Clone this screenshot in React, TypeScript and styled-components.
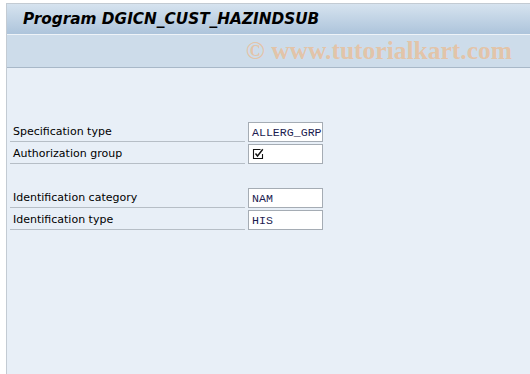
import React from "react";
import styled, { createGlobalStyle } from "styled-components";

const GlobalStyle = createGlobalStyle`
  html, body {
    margin: 0;
    padding: 0;
    background: #ffffff;
  }
`;

const Page = styled.div`
  height: 374px;
  padding: 3px 0 0 6px;
  box-sizing: border-box;
  display: flex;
  flex-direction: column;
  overflow: hidden;
`;

const Frame = styled.div`
  flex: 1;
  display: flex;
  flex-direction: column;
  border-left: 1px solid #c3cbd3;
  border-top: 1px solid #c3cbd3;
  box-shadow: inset 1px 0 0 #f4f7fa;
`;

const TitleBar = styled.div`
  height: 30px;
  display: flex;
  align-items: center;
  padding-left: 16px;
  background: linear-gradient(#d6e3ef, #adc4db);
  border-bottom: 1px solid #eef3f8;
  font-family: "DejaVu Sans", sans-serif;
  font-weight: bold;
  font-style: italic;
  font-size: 15.3px;
  color: #000000;
`;

const Watermark = styled.div`
  height: 32px;
  display: flex;
  align-items: center;
  justify-content: flex-end;
  padding-right: 18px;
  background: #cddcea;
  border-bottom: 1px solid #a8b8c8;
  font-family: "Liberation Serif", serif;
  font-weight: bold;
  font-size: 25.5px;
  color: rgba(242, 180, 125, 0.62);
`;

const Content = styled.div`
  flex: 1;
  background: #e8eff7;
  padding: 52px 0 0 3px;
  display: flex;
  flex-direction: column;
`;

const Group = styled.div<{ gap?: boolean }>`
  display: flex;
  flex-direction: column;
  margin-top: ${(p) => (p.gap ? "22px" : "0")};
`;

const Row = styled.div`
  display: flex;
  align-items: flex-end;
  height: 22px;
`;

const Label = styled.div`
  width: 235px;
  box-sizing: border-box;
  padding: 0 0 2px 3px;
  border-bottom: 1px solid #b6bec6;
  font-family: "DejaVu Sans", sans-serif;
  font-size: 11px;
  color: #000000;
  line-height: 15px;
`;

const Field = styled.div`
  margin-left: 3px;
  width: 75px;
  height: 20px;
  box-sizing: border-box;
  border: 1px solid #a5acb4;
  background: #ffffff;
  display: flex;
  align-items: center;
  padding-left: 3px;
  font-family: "Liberation Mono", monospace;
  font-size: 11.6px;
  color: #1c1c50;
  white-space: nowrap;
  overflow: hidden;
`;

const Check = styled.svg`
  width: 12px;
  height: 12px;
`;

function CheckIcon() {
  return (
    <Check viewBox="0 0 12 12">
      <path d="M8.5 1.5H1.5V10.5H10.5V6" fill="none" stroke="#111" strokeWidth="1.1" />
      <path d="M3.5 5.5L5.5 8L10.8 1.2" fill="none" stroke="#111" strokeWidth="1.4" />
    </Check>
  );
}

export default function App() {
  return (
    <>
      <GlobalStyle />
      <Page>
        <Frame>
          <TitleBar>Program DGICN_CUST_HAZINDSUB</TitleBar>
          <Watermark>© www.tutorialkart.com</Watermark>
          <Content>
            <Group>
              <Row>
                <Label>Specification type</Label>
                <Field>ALLERG_GRP</Field>
              </Row>
              <Row>
                <Label>Authorization group</Label>
                <Field>
                  <CheckIcon />
                </Field>
              </Row>
            </Group>
            <Group gap>
              <Row>
                <Label>Identification category</Label>
                <Field>NAM</Field>
              </Row>
              <Row>
                <Label>Identification type</Label>
                <Field>HIS</Field>
              </Row>
            </Group>
          </Content>
        </Frame>
      </Page>
    </>
  );
}
